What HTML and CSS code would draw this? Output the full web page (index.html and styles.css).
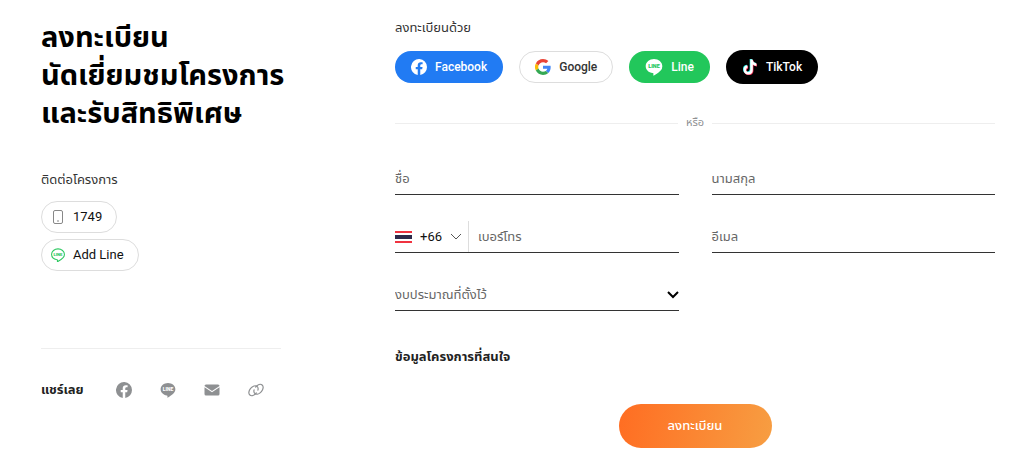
FILE: index.html
```html
<!DOCTYPE html>
<html lang="th">
<head>
    <meta charset="UTF-8">
    <meta name="viewport" content="width=device-width, initial-scale=1.0">
    <title>ลงทะเบียน</title>
    <link rel="stylesheet" href="styles.css">
</head>
<body>
    <svg class="sprite" aria-hidden="true">
        <symbol id="icon-facebook" viewBox="0 0 24 24">
            <path d="M24 12a12 12 0 1 0-13.9 11.9v-8.4H7.1V12h3V9.400c0-3 1.800-4.700 4.600-4.700 1.300 0 2.700.2 2.700.2v3h-1.500c-1.500 0-2 .9-2 1.900V12h3.400l-.5 3.500h-2.900v8.400A12 12 0 0 0 24 12z"/>
        </symbol>
        <symbol id="icon-link" viewBox="0 0 24 24">
            <g fill="none" stroke="currentColor" stroke-width="1.800" stroke-linecap="round">
                <path d="M12.500 16.500c-3 3.600-7.300 5-9.700 3.100-2.400-1.900-1.900-6.300 1.100-9.900s7.300-5 9.700-3.100c1.500 1.200 1.900 3.400 1.300 5.700"/>
                <path d="M11.500 7.500c3-3.600 7.300-5 9.700-3.100 2.400 1.900 1.900 6.300-1.100 9.900s-7.300 5-9.700 3.100c-1.500-1.200-1.900-3.400-1.300-5.700"/>
            </g>
        </symbol>
        <symbol id="icon-line" viewBox="-1 -1 26 26">
            <path d="M24 10.800C24 5.100 18.600.5 12 .5S0 5.100 0 10.800c0 5 4.300 9.200 10 10 1.700.3 1.300 1 .9 3.100-.1.500.2.700.8.400 1.500-.8 7-4.200 9.900-7.400A8.500 8.500 0 0 0 24 10.800z"/>
        </symbol>
    </svg>

    <main class="register">
        <section class="intro">
            <h1>ลงทะเบียน<br>นัดเยี่ยมชมโครงการ<br>และรับสิทธิพิเศษ</h1>

            <div class="contact">
                <p>ติดต่อโครงการ</p>
                <a class="pill" href="tel:1749">
                    <svg class="icon icon-phone" viewBox="0 0 16 16">
                        <rect x="3.500" y="1.500" width="9" height="13" rx="1.500" fill="none" stroke="currentColor"/>
                        <path d="M7 12h2" stroke="currentColor"/>
                    </svg>
                    1749
                </a>
                <a class="pill" href="#line">
                    <svg class="icon icon-add-line" viewBox="-2 -2 30 30">
                        <use href="#icon-line" width="26" height="26"/>
                        <text x="13" y="15">LINE</text>
                    </svg>
                    Add Line
                </a>
            </div>

            <div class="share">
                <strong>แชร์เลย</strong>
                <a href="#facebook" aria-label="Facebook"><svg class="icon"><use href="#icon-facebook"/></svg></a>
                <a href="#line" aria-label="Line">
                    <svg class="icon icon-line" viewBox="0 0 26 26"><use href="#icon-line"/><text x="13" y="15">LINE</text></svg>
                </a>
                <a href="#email" aria-label="Email">
                    <svg class="icon" viewBox="0 0 16 16">
                        <path d="M2 2.500h12A1.500 1.500 0 0 1 15.500 4L8 9 .5 4A1.500 1.500 0 0 1 2 2.500z"/>
                        <path d="M.5 5.300 8 10.300l7.500-5V12a1.500 1.500 0 0 1-1.500 1.500H2A1.500 1.500 0 0 1 .5 12z"/>
                    </svg>
                </a>
                <a href="#link" aria-label="Link"><svg class="icon"><use href="#icon-link"/></svg></a>
            </div>
        </section>

        <form class="form" action="#" method="post">
            <p>ลงทะเบียนด้วย</p>
            <div class="social">
                <button type="button" class="btn facebook">
                    <svg class="icon"><use href="#icon-facebook"/></svg>
                    Facebook
                </button>
                <button type="button" class="btn google">
                    <svg class="icon" viewBox="0 0 48 48">
                        <path fill="#ea4335" d="M24 9.500c3.500 0 6.700 1.200 9.200 3.600l6.900-6.900C35.900 2.400 30.500 0 24 0 14.600 0 6.500 5.400 2.600 13.200l8 6.200C12.400 13.700 17.700 9.500 24 9.500z"/>
                        <path fill="#4285f4" d="M47 24.600c0-1.600-.2-3.100-.4-4.600H24v9h12.900c-.6 3-2.200 5.500-4.700 7.200l7.700 6C44.400 38 47 31.800 47 24.600z"/>
                        <path fill="#fbbc05" d="M10.500 28.600a14.500 14.500 0 0 1 0-9.200l-8-6.200a24 24 0 0 0 0 21.600z"/>
                        <path fill="#34a853" d="M24 48c6.500 0 11.900-2.100 15.900-5.800l-7.700-6c-2.200 1.500-4.900 2.300-8.200 2.300-6.300 0-11.600-4.200-13.500-9.900l-8 6.200C6.500 42.600 14.600 48 24 48z"/>
                    </svg>
                    Google
                </button>
                <button type="button" class="btn line">
                    <svg class="icon icon-line" viewBox="0 0 26 26"><use href="#icon-line"/><text x="13" y="15">LINE</text></svg>
                    Line
                </button>
                <button type="button" class="btn tiktok">
                    <svg class="icon" viewBox="-1 -1 26 26">
                        <defs>
                            <path id="note" d="M12.500 0h3.900c.1 1.500.6 3.100 1.800 4.200 1.100 1.100 2.700 1.600 4.200 1.800v4c-1.400 0-2.900-.3-4.200-1-.6-.2-1.100-.6-1.600-.9v8.700a7.500 7.500 0 1 1-8.700-7.500v4.100a3.500 3.500 0 1 0 4.600 3.400z"/>
                        </defs>
                        <use href="#note" x="-1" y="-1" fill="#25f4ee"/>
                        <use href="#note" x="1" y="1" fill="#fe2c55"/>
                        <use href="#note" fill="#fff"/>
                    </svg>
                    TikTok
                </button>
            </div>

            <div class="divider"><span>หรือ</span></div>

            <div class="fields">
                <label class="field">
                    <span>ชื่อ</span>
                    <input type="text" name="firstname">
                </label>
                <label class="field">
                    <span>นามสกุล</span>
                    <input type="text" name="lastname">
                </label>
                <div class="field">
                    <div class="country">
                        <svg class="flag" viewBox="0 0 17 12">
                            <path fill="#ef3340" d="M0 0h17v12H0z"/>
                            <path fill="#fff" d="M0 2h17v8H0z"/>
                            <path fill="#2d2a4a" d="M0 4h17v4H0z"/>
                        </svg>
                        <select name="code" aria-label="รหัสประเทศ">
                            <option>+66</option>
                        </select>
                        <svg class="chevron thin" viewBox="0 0 12 12"><path d="M1 3l5 5 5-5"/></svg>
                    </div>
                    <label for="phone">เบอร์โทร</label>
                    <input type="tel" id="phone" name="phone">
                </div>
                <label class="field">
                    <span>อีเมล</span>
                    <input type="email" name="email">
                </label>
                <div class="field">
                    <select class="budget" name="budget" aria-label="งบประมาณ">
                        <option>งบประมาณที่ตั้งไว้</option>
                    </select>
                    <svg class="chevron" viewBox="0 0 12 12"><path d="M1 3l5 5 5-5"/></svg>
                </div>
            </div>

            <h2>ข้อมูลโครงการที่สนใจ</h2>
            <button type="submit" class="submit">ลงทะเบียน</button>
        </form>
    </main>
</body>
</html>
```
FILE: styles.css
```css
* {
    box-sizing: border-box;
}

body {
    margin: 0;
    background-color: #fff;
    color: #333;
    font-family: Roboto, "Noto Sans Thai", sans-serif;
    font-size: 13px;
    line-height: 20px;
}

h1, h2, p {
    margin: 0;
}

a {
    color: inherit;
    text-decoration: none;
}

button, input, select {
    font: inherit;
    color: inherit;
    border: none;
    background: none;
    padding: 0;
    margin: 0;
}

button {
    cursor: pointer;
}

.sprite {
    position: absolute;
    width: 0;
    height: 0;
}

.icon {
    display: block;
    width: 16px;
    height: 16px;
    flex: none;
    fill: currentColor;
}

.icon text {
    font-size: 8px;
    font-weight: 900;
    text-anchor: middle;
}

.register {
    display: grid;
    grid-template-columns: minmax(0, 2fr) minmax(0, 5fr);
    column-gap: 114px;
    padding: 18px 29px 20px 41px;
}

/* left column */
.intro h1 {
    color: #000;
    font-size: 29px;
    line-height: 38px;
    font-weight: 700;
    white-space: nowrap;
}

.contact {
    display: flex;
    flex-direction: column;
    align-items: flex-start;
    gap: 6px;
    margin-top: 38px;
}

.contact p {
    margin-bottom: 5px;
}

.pill {
    display: flex;
    align-items: center;
    gap: 7px;
    height: 32px;
    padding: 0 14px 0 8px;
    border: 1px solid #ddd;
    border-radius: 16px;
    color: #111;
}

.icon-phone {
    color: #888;
}

.icon-add-line {
    color: #2cc860;
}

.icon-add-line use {
    fill: none;
    stroke: currentColor;
    stroke-width: 2;
}

.share {
    display: flex;
    align-items: center;
    gap: 28px;
    margin-top: 77px;
    padding-top: 31px;
    border-top: 1px solid #eee;
    color: #8e9092;
}

.share strong {
    color: #222;
    margin-right: 4px;
}

.share .icon-line text {
    fill: #fff;
}

/* right column */
.social {
    display: flex;
    align-items: center;
    gap: 16px;
    height: 34px;
    margin-top: 12px;
}

.btn {
    display: flex;
    align-items: center;
    gap: 8px;
    height: 32px;
    padding: 0 16px;
    border-radius: 17px;
    color: #fff;
    font-size: 12px;
    font-weight: 500;
}

.facebook {
    background-color: #217bf3;
}

.google {
    padding: 0 15px;
    border: 1px solid #ddd;
    color: #333;
}

.line {
    background-color: #22c75b;
}

.line .icon {
    width: 18px;
    height: 18px;
}

.line text {
    fill: #22c75b;
}

.tiktok {
    height: 34px;
    background-color: #000;
}

.divider {
    display: flex;
    align-items: center;
    gap: 8px;
    margin-top: 29px;
    color: #8e9092;
    font-size: 11px;
}

.divider::before, .divider::after {
    content: "";
    flex: 1;
    height: 1px;
    background-color: #eee;
}

.divider::before {
    flex: 0 1 283px;
}

.fields {
    display: grid;
    grid-template-columns: minmax(0, 1fr) minmax(0, 1fr);
    gap: 22px 33px;
    margin-top: 26px;
    color: #666;
}

.field {
    display: flex;
    align-items: center;
    height: 36px;
    padding-top: 4px;
    border-bottom: 1px solid #333;
}

.field input {
    flex: 1;
    min-width: 0;
    outline: none;
}

.field select {
    appearance: none;
    outline: none;
}

.country {
    display: flex;
    align-items: center;
    align-self: stretch;
    gap: 8px;
    margin-right: 9px;
    padding-right: 6px;
    border-right: 1px solid #ddd;
    color: #111;
}

.flag {
    width: 17px;
    height: 12px;
}

.chevron {
    width: 12px;
    height: 12px;
    fill: none;
    stroke: #000;
    stroke-width: 2;
}

.thin {
    stroke: #555;
    stroke-width: 1;
}

.budget {
    flex: 1;
}

.form h2 {
    margin-top: 36px;
    color: #222;
    font-size: 13px;
    font-weight: 700;
    line-height: 20px;
}

.submit {
    display: block;
    width: 153px;
    height: 44px;
    margin: 37px auto 0;
    border-radius: 22px;
    background: linear-gradient(100deg, #ff6d22, #f79e42);
    color: #fff;
    font-weight: 500;
}
```
